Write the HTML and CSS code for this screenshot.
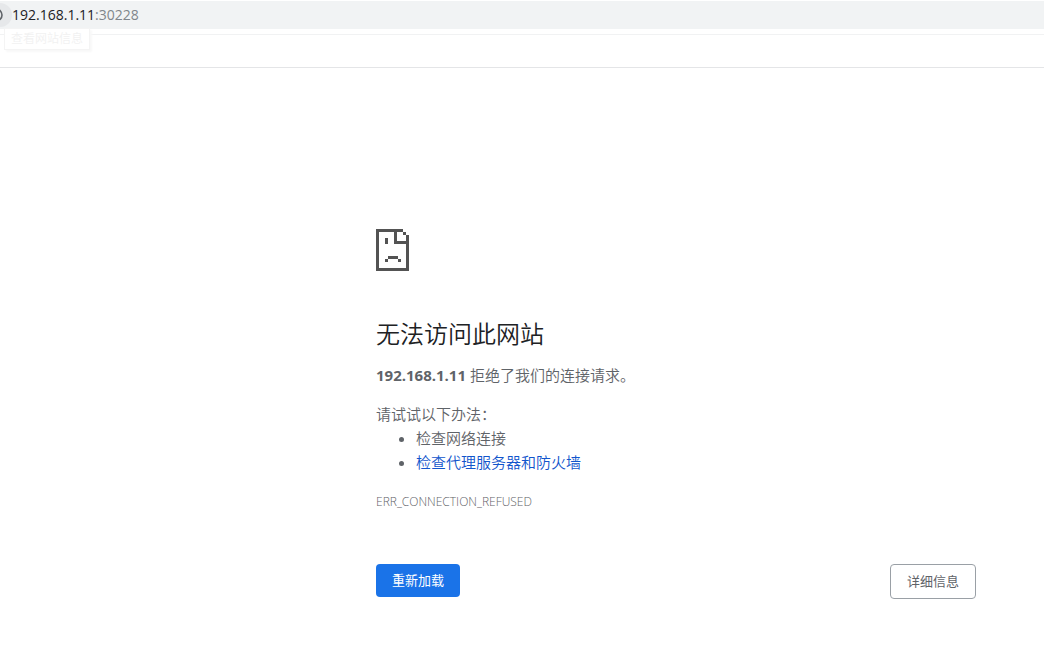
FILE: index.html
```html
<!DOCTYPE html>
<html lang="zh-CN">
<head>
<meta charset="utf-8">
<meta name="viewport" content="width=device-width, initial-scale=1">
<title>192.168.1.11</title>
<link rel="stylesheet" href="styles.css">
</head>
<body>
<header class="toolbar">
  <div class="omnibox">
    <button class="site-info" type="button" aria-label="查看网站信息" aria-describedby="site-tip">
      <svg class="info-icon" viewBox="0 0 16 16" aria-hidden="true"><circle cx="8" cy="8" r="6" fill="none" stroke="#5f6368" stroke-width="1.6"/><path d="M8 7v4M8 4.5v1.2" stroke="#5f6368" stroke-width="1.6"/></svg>
    </button>
    <div class="address" role="textbox" aria-label="地址" contenteditable="true" spellcheck="false">192.168.1.11<span class="port">:30228</span></div>
  </div>
  <div class="tooltip" id="site-tip" role="tooltip">查看网站信息</div>
  <div class="bookmarks"></div>
</header>
<main class="error-page">
  <svg class="sad-page" viewBox="0 0 33 42" shape-rendering="crispEdges" aria-hidden="true">
    <path fill="#535353" d="M0 0H27V3H21V12H30V6H33V42H0ZM3 3V39H30V15H18V3ZM27 3H30V6H27ZM9 9H12V15H9ZM12 27H22V30H12ZM9 30H12V33H9ZM22 30H25V33H22Z" fill-rule="evenodd"/>
  </svg>
  <h1 class="title">无法访问此网站</h1>
  <p class="summary"><strong>192.168.1.11</strong> 拒绝了我们的连接请求。</p>
  <div class="suggestions">
    <p class="lead">请试试以下办法：</p>
    <ul class="list">
      <li>检查网络连接</li>
      <li><a class="link" href="#proxy">检查代理服务器和防火墙</a></li>
    </ul>
  </div>
  <p class="code">ERR_CONNECTION_REFUSED</p>
  <div class="actions">
    <button class="button primary" type="button">重新加载</button>
    <button class="button secondary" type="button">详细信息</button>
  </div>
</main>
</body>
</html>
```
FILE: styles.css
```css
* {
  box-sizing: border-box;
}

body {
  margin: 0;
  background: #fff;
  color: #5f6368;
  font-family: "Open Sans", "Noto Sans CJK SC", sans-serif;
  font-size: 15px;
  font-weight: 350;
  line-height: 24px;
}

h1, p, ul {
  margin: 0;
}

strong {
  font-weight: 700;
}

.toolbar {
  position: relative;
  padding-top: 1px;
  border-bottom: 1px solid #e4e5e7;
}

.omnibox {
  display: flex;
  align-items: center;
  height: 28px;
  background: #f1f3f4;
  overflow: hidden;
}

.site-info {
  display: flex;
  align-items: center;
  justify-content: flex-end;
  width: 24px;
  height: 24px;
  margin-left: -12px;
  padding: 0 8px 0 0;
  border: 0;
  border-radius: 12px;
  background: #e6e8ea;
}

.info-icon {
  flex: none;
  width: 16px;
  height: 16px;
}

.address {
  flex: 1;
  color: #202124;
  font-size: 14px;
  font-weight: 400;
  outline: 0;
}

.port {
  color: #80868b;
}

.tooltip {
  position: absolute;
  top: 28px;
  left: 4px;
  padding: 0 6px;
  border: 1px solid #f4f4f4;
  background: #fff;
  box-shadow: 2px 2px 2px #f8f8f8;
  color: #f1f1f1;
  font-size: 12px;
  line-height: 20px;
}

.bookmarks {
  height: 33px;
  margin-top: 5px;
  border-top: 1px solid #f1f2f3;
}

.error-page {
  max-width: 600px;
  margin: 161px 68px 0 auto;
}

.sad-page {
  display: block;
  width: 33px;
  height: 42px;
}

.title {
  margin-top: 48px;
  color: #202124;
  font-size: 24px;
  font-weight: 350;
  line-height: 30px;
}

.summary {
  margin-top: 14px;
}

.suggestions {
  margin-top: 15px;
}

.list {
  padding-left: 40px;
}

.link {
  color: #1155cc;
  text-decoration: none;
}

.code {
  margin-top: 16px;
  font-size: 12px;
}

.actions {
  display: flex;
  align-items: flex-start;
  justify-content: space-between;
  margin-top: 50px;
}

.button {
  padding: 8px 16px;
  border: 0;
  border-radius: 4px;
  font-family: inherit;
  font-size: 13px;
  line-height: 17px;
}

.primary {
  background: #1a73e8;
  color: #fff;
}

.secondary {
  border: 1px solid #9aa0a6;
  background: #fff;
  color: #5f6368;
}
```
